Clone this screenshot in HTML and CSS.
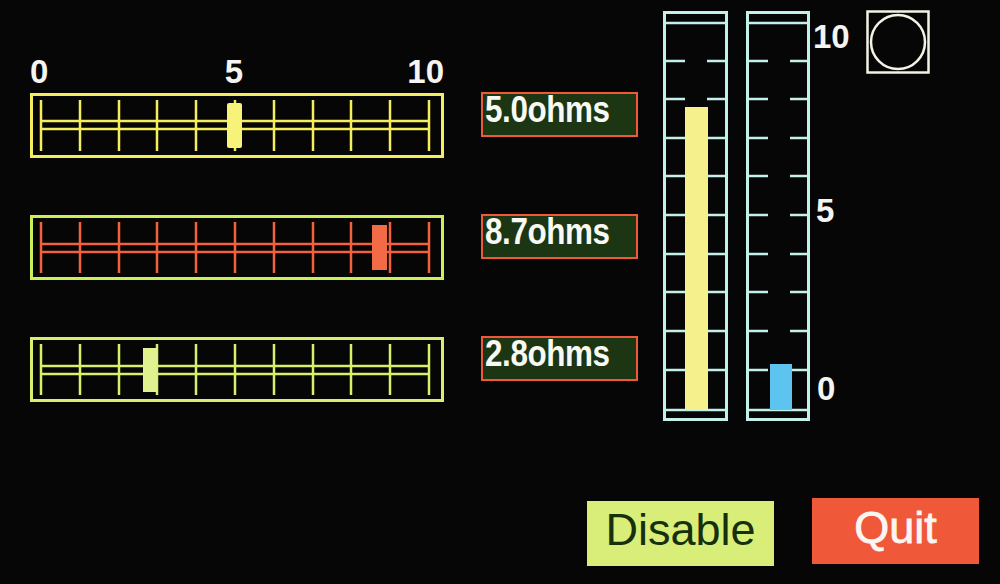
FILE: index.html
```
<!DOCTYPE html>
<html lang="en">
<head>
    <meta charset="UTF-8">
    <meta name="viewport" content="width=device-width, initial-scale=1.0">
    <title>Slider demo</title>
    <link rel="stylesheet" href="styles.css">
</head>
<body>
    <div class="screen">
        <div class="top-area">
            <!-- horizontal sliders -->
            <div class="slider-column">
                <div class="scale-row">
                    <span>0</span>
                    <span class="scale-mid">5</span>
                    <span>10</span>
                </div>

                <svg class="slider slider-yellow" width="414" height="65">
                    <rect class="frame" x="1.5" y="1.5" width="411" height="62"/>
                    <path class="ticks" d="M11 7V58M50 7V58M89 7V58M127 7V58M166 7V58M205 7V58M244 7V58M283 7V58M321 7V58M360 7V58M399 7V58"/>
                    <path class="rails" d="M11 28H399M11 36H399"/>
                    <rect class="thumb" x="197" y="10" width="15" height="45" rx="2"/>
                </svg>

                <svg class="slider slider-red" width="414" height="65">
                    <rect class="frame" x="1.5" y="1.5" width="411" height="62"/>
                    <path class="ticks" d="M11 7V58M50 7V58M89 7V58M127 7V58M166 7V58M205 7V58M244 7V58M283 7V58M321 7V58M360 7V58M399 7V58"/>
                    <path class="rails" d="M11 29H399M11 37H399"/>
                    <rect class="thumb" x="342" y="10" width="15" height="45"/>
                </svg>

                <svg class="slider slider-green" width="414" height="65">
                    <rect class="frame" x="1.5" y="1.5" width="411" height="62"/>
                    <path class="ticks" d="M11 7V58M50 7V58M89 7V58M127 7V58M166 7V58M205 7V58M244 7V58M283 7V58M321 7V58M360 7V58M399 7V58"/>
                    <path class="rails" d="M11 29H399M11 37H399"/>
                    <rect class="thumb" x="113" y="11" width="14" height="44"/>
                </svg>
            </div>

            <!-- 값 표시 -->
            <div class="value-column">
                <div class="value-box"><span class="value-text">5.0ohms</span></div>
                <div class="value-box"><span class="value-text">8.7ohms</span></div>
                <div class="value-box"><span class="value-text">2.8ohms</span></div>
            </div>

            <!-- vertical bars -->
            <svg class="bars" width="150" height="410">
                <rect class="bar-frame" x="1.5" y="1.5" width="62" height="407"/>
                <path class="bar-lines" d="M0 12H65M0 399H65M0 50H22M44 50H65M0 88H22M44 88H65M0 127H22M44 127H65M0 165H22M44 165H65M0 204H22M44 204H65M0 243H22M44 243H65M0 281H22M44 281H65M0 320H22M44 320H65M0 359H22M44 359H65"/>
                <rect class="bar-fill-yellow" x="22" y="96" width="23" height="303"/>

                <rect class="bar-frame" x="84.5" y="1.5" width="61" height="407"/>
                <path class="bar-lines" d="M83 12H147M83 399H147M83 50H105M127 50H147M83 88H105M127 88H147M83 127H105M127 127H147M83 165H105M127 165H147M83 204H105M127 204H147M83 243H105M127 243H147M83 281H105M127 281H147M83 320H105M127 320H147M83 359H105M127 359H147"/>
                <rect class="bar-fill-blue" x="107" y="353" width="22" height="46"/>
            </svg>

            <div class="bar-scale">
                <span class="bar-ten">10</span>
                <span class="bar-five">5</span>
                <span class="bar-zero">0</span>
            </div>

            <svg class="circle-box" width="64" height="64">
                <rect x="1.5" y="1.5" width="61" height="61"/>
                <circle cx="32" cy="32" r="27"/>
            </svg>
        </div>

        <!-- 버튼 -->
        <div class="button-row">
            <button class="btn btn-disable">Disable</button>
            <button class="btn btn-quit">Quit</button>
        </div>
    </div>
</body>
</html>
```

FILE: styles.css
```
/* 공통 스타일 */
body {
    margin: 0;
    background-color: #060606;
    font-family: "Liberation Sans", Arial, sans-serif;
}

.screen {
    width: 1000px;
    height: 584px;
    background-color: #060606;
    display: flex;
    flex-direction: column;
    overflow: hidden;
}

.top-area {
    display: flex;
    align-items: flex-start;
    height: 421px;
}

/* 슬라이더 */
.slider-column {
    margin-left: 30px;
    width: 414px;
    display: flex;
    flex-direction: column;
}

.scale-row {
    margin-top: 56px;
    display: flex;
    justify-content: space-between;
    font-size: 33px;
    font-weight: bold;
    line-height: 32px;
    color: #f4f4f2;
}
.scale-mid {
    margin-left: 12px;
}

.slider {
    display: block;
    margin-top: 57px;
}
.scale-row + .slider {
    margin-top: 5px;
}

.slider .frame {
    fill: none;
    stroke-width: 3;
}
.slider .ticks {
    fill: none;
    stroke-width: 2.5;
}
.slider .rails {
    fill: none;
    stroke-width: 2.5;
}

.slider-yellow .frame,
.slider-yellow .ticks,
.slider-yellow .rails {
    stroke: #f4ee5e;
}
.slider-yellow .thumb {
    fill: #f6f27a;
}

.slider-red .frame {
    stroke: #ccee58;
}
.slider-red .ticks,
.slider-red .rails {
    stroke: #f2603e;
}
.slider-red .thumb {
    fill: #f26a46;
}

.slider-green .frame,
.slider-green .ticks,
.slider-green .rails {
    stroke: #d6f06c;
}
.slider-green .thumb {
    fill: #e0f290;
}

/* 값 박스 */
.value-column {
    margin-left: 37px;
    margin-top: 92px;
    display: flex;
    flex-direction: column;
    gap: 77px;
}

.value-box {
    width: 151px;
    height: 41px;
    border: 2px solid #f0583a;
    background-color: #1c3512;
    padding-left: 2px;
    box-sizing: content-box;
    white-space: nowrap;
}
.value-text {
    display: inline-block;
    color: #f8f8f4;
    font-size: 37px;
    font-weight: bold;
    letter-spacing: -0.5px;
    line-height: 31px;
    transform: scaleX(0.85);
    transform-origin: left center;
}

/* 세로 막대 */
.bars {
    display: block;
    margin-left: 25px;
    margin-top: 11px;
}
.bar-frame {
    fill: none;
    stroke: #c4f0ea;
    stroke-width: 3;
}
.bar-lines {
    fill: none;
    stroke: #c4f0ea;
    stroke-width: 2.5;
}
.bar-fill-yellow {
    fill: #f6f08c;
}
.bar-fill-blue {
    fill: #5cc4ee;
}

.bar-scale {
    display: flex;
    flex-direction: column;
    align-items: flex-start;
    margin-top: 21px;
    font-size: 33px;
    font-weight: bold;
    line-height: 32px;
    color: #f4f4f2;
}
.bar-five {
    margin-top: 142px;
    margin-left: 3px;
}
.bar-zero {
    margin-top: 146px;
    margin-left: 4px;
}

.circle-box {
    display: block;
    margin-left: 16px;
    margin-top: 10px;
}
.circle-box rect,
.circle-box circle {
    fill: none;
    stroke: #f4f2e4;
    stroke-width: 2.5;
}

/* 버튼 */
.button-row {
    display: flex;
    justify-content: flex-end;
    align-items: flex-start;
    gap: 38px;
    margin-top: 77px;
    padding-right: 21px;
}

.btn {
    border: none;
    padding: 0;
    font-family: "Liberation Sans", Arial, sans-serif;
    font-size: 45px;
    text-align: center;
}

.btn-disable {
    width: 187px;
    height: 65px;
    margin-top: 3px;
    line-height: 57px;
    padding-bottom: 8px;
    background-color: #d8ee78;
    color: #17300c;
}

.btn-quit {
    width: 167px;
    height: 66px;
    line-height: 59px;
    padding-bottom: 7px;
    background-color: #f0583a;
    color: #fbf6f2;
    -webkit-text-stroke: 0.8px #fbf6f2;
}
```
